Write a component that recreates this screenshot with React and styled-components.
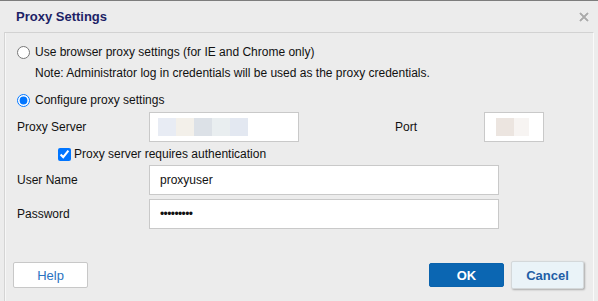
import React from 'react';
import styled, { createGlobalStyle } from 'styled-components';

const GlobalStyle = createGlobalStyle`
    body {
        margin: 0;
        background: #ececec;
        font-family: "Liberation Sans", Arial, sans-serif;
    }
`

const Dialog = styled.div`
    width: 598px;
    height: 301px;
    box-sizing: border-box;
    border-top: 1px solid #7d7d7d;
    background: #ececec;
    display: flex;
    flex-direction: column;
`

const Header = styled.div`
    height: 31px;
    display: flex;
    align-items: center;
    justify-content: space-between;
    padding: 0 9px 0 16px;
`

const Title = styled.h2`
    margin: 0;
    font-size: 13px;
    font-weight: bold;
    color: #1d1f66;
`

const CloseButton = styled.button`
    border: none;
    background: none;
    padding: 0;
    width: 10px;
    height: 10px;
    display: flex;
    cursor: pointer;
`

const Panel = styled.div`
    flex: 1;
    margin: 0 4px;
    border-top: 1px solid #d2d2d2;
    border-left: 1px solid #d4d4d4;
    border-right: 1px solid #fafafa;
    box-shadow: inset 1px 0 0 #f7f7f7;
    display: flex;
    flex-direction: column;
    padding: 9px 0 0 12px;
`

const OptionRow = styled.label`
    display: flex;
    align-items: center;
    gap: ${props => props.gap || 5}px;
    height: 20px;
    margin-top: ${props => props.top || 0}px;
    margin-left: ${props => props.indent || 0}px;
    font-size: 12px;
    color: #111;
`

const Radio = styled.input.attrs({ type: 'radio' })`
    margin: 0;
    width: 13px;
    height: 13px;
    accent-color: #0075ff;
`

const Checkbox = styled.input.attrs({ type: 'checkbox' })`
    margin: 0;
    width: 13px;
    height: 13px;
    accent-color: #0075ff;
`

const Note = styled.div`
    height: 22px;
    line-height: 22px;
    padding-left: 18px;
    font-size: 12px;
    color: #111;
`

const FieldRow = styled.div`
    display: flex;
    align-items: center;
    margin-top: ${props => props.top || 0}px;
`

const Label = styled.div`
    width: ${props => props.width || 132}px;
    margin-left: ${props => props.offset || 0}px;
    font-size: 12px;
    color: #111;
`

const Field = styled.div`
    width: ${props => props.width}px;
    height: 30px;
    box-sizing: border-box;
    border: 1px solid #c9c9c9;
    background: #fff;
    display: flex;
    align-items: center;
    padding-left: ${props => props.pad || 10}px;
    font-size: 12px;
    color: #111;
`

const Masked = styled.div`
    display: flex;
    height: 18px;
`

const Swatch = styled.span`
    width: ${props => props.w || 18}px;
    background: ${props => props.color};
`

const Dots = styled.span`
    font-size: 12px;
    letter-spacing: -0.6px;
`

const Footer = styled.div`
    margin: auto 0 0 -4px;
    display: flex;
    align-items: center;
    padding: 0 9px 12px 0;
`

const Button = styled.button`
    width: ${props => props.width || 75}px;
    height: ${props => props.height || 26}px;
    box-sizing: border-box;
    border-radius: 2px;
    font-family: "Liberation Sans", Arial, sans-serif;
    font-size: 13px;
    cursor: pointer;
    border: 1px solid #c8c8c8;
    background: #fff;
    color: #2b72bf;
`

const PrimaryButton = styled(Button)`
    border: 1px solid #0a63ad;
    background: #0b66b2;
    color: #fff;
    font-weight: bold;
    margin-left: auto;
    height: 24px;
`

const SecondaryButton = styled(Button)`
    background: #eaf3f8;
    color: #1f5ea6;
    font-weight: bold;
    margin-left: 7px;
    border-color: #d4d8da;
    box-shadow: 1px 1px 2px rgba(0, 0, 0, 0.28);
`

const CloseIcon = () => (
    <svg width="10" height="10" viewBox="0 0 10 10">
        <path d="M1 1 L9 9 M9 1 L1 9" stroke="#8c8c8c" strokeWidth="1.6" fill="none" />
        <path d="M1 1 L9 9 M9 1 L1 9" stroke="#d8d8d8" strokeWidth="0.4" fill="none" />
    </svg>
)

const serverSwatches = ['#e8ecf4', '#f3f0ea', '#dce1e7', '#e9eef0', '#e3e8f1'];

const App = () => {
    return (
        <>
            <GlobalStyle />
            <Dialog>
                <Header>
                    <Title>Proxy Settings</Title>
                    <CloseButton aria-label="Close"><CloseIcon /></CloseButton>
                </Header>
                <Panel>
                    <OptionRow>
                        <Radio name="proxy" readOnly />
                        Use browser proxy settings (for IE and Chrome only)
                    </OptionRow>
                    <Note>Note: Administrator log in credentials will be used as the proxy credentials.</Note>
                    <OptionRow top={6}>
                        <Radio name="proxy" defaultChecked />
                        Configure proxy settings
                    </OptionRow>
                    <FieldRow top={2}>
                        <Label>Proxy Server</Label>
                        <Field width={150} pad={8}>
                            <Masked>
                                {serverSwatches.map(c => <Swatch key={c} color={c} />)}
                            </Masked>
                        </Field>
                        <Label width={89} offset={96}>Port</Label>
                        <Field width={60} pad={11}>
                            <Masked>
                                <Swatch color="#ece5e0" />
                                <Swatch color="#f7f4f2" w={15} />
                            </Masked>
                        </Field>
                    </FieldRow>
                    <OptionRow top={2} indent={41} gap={3}>
                        <Checkbox defaultChecked />
                        Proxy server requires authentication
                    </OptionRow>
                    <FieldRow top={1}>
                        <Label>User Name</Label>
                        <Field width={350}>proxyuser</Field>
                    </FieldRow>
                    <FieldRow top={4}>
                        <Label>Password</Label>
                        <Field width={350}><Dots>•••••••••</Dots></Field>
                    </FieldRow>
                    <Footer>
                        <Button>Help</Button>
                        <PrimaryButton>OK</PrimaryButton>
                        <SecondaryButton width={73} height={28}>Cancel</SecondaryButton>
                    </Footer>
                </Panel>
            </Dialog>
        </>
    );
}

export default App;
